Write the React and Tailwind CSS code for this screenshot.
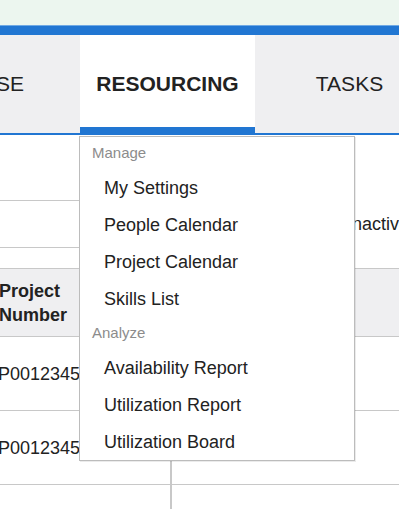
import React from "react";

const manage = ["My Settings", "People Calendar", "Project Calendar", "Skills List"];
const analyze = ["Availability Report", "Utilization Report", "Utilization Board"];

const MenuItem = ({ label }) => (
  <div className="flex h-[37px] items-center pl-6 pt-[2px] text-[18px] text-[#222]">{label}</div>
);

const MenuHeader = ({ label }) => (
  <div className="flex h-8 items-center pl-3 pt-[1px] text-[15px] text-[#8c8c8c]">{label}</div>
);

const App = () => {
  return (
    <div className="h-[509px] w-[399px] overflow-hidden bg-white font-['Liberation_Sans',Arial,sans-serif] text-[#222]">
      {/* top strip */}
      <div className="h-[25px] bg-[#ecf6ef]" />
      <div className="h-[10px] border-t border-[#6fa9e4] bg-[#2176d2]" />

      {/* tabs */}
      <div className="relative flex h-[100px] border-b-2 border-[#2176d2] bg-[#efeff1]">
        <div className="flex w-[80px] shrink-0 items-center overflow-hidden">
          <span className="-ml-[4px] text-[21px]">SE</span>
        </div>
        <div className="relative flex w-[175px] shrink-0 items-center justify-center border-b-[6px] border-[#2176d2] bg-white pt-[6px]">
          <span className="text-[21px] font-bold">RESOURCING</span>
          <div className="absolute left-[-1px] top-[101px] z-10 w-[276px] border border-[#bcbcbc] bg-white shadow-[1px_1px_0_rgba(0,0,0,0.08)]">
            <MenuHeader label="Manage" />
            {manage.map((m) => (
              <MenuItem key={m} label={m} />
            ))}
            <MenuHeader label="Analyze" />
            {analyze.map((m) => (
              <MenuItem key={m} label={m} />
            ))}
          </div>
        </div>
        <div className="flex w-[189px] shrink-0 items-center justify-center">
          <span className="text-[21px]">TASKS</span>
        </div>
      </div>

      {/* page behind */}
      <div className="h-[66px] w-[172px] border-b border-[#c8c8c8]" />
      <div className="flex h-[47px] items-center">
        <div className="h-full w-[172px] shrink-0 border-b border-[#c8c8c8]" />
        <span className="ml-[175px] shrink-0 text-[18px]">Inactive</span>
      </div>
      <div className="h-[20px]" />

      <div className="flex h-[69px] border-y border-[#c8c8c8] bg-[#efeff1]">
        <div className="-ml-[1px] flex w-[172px] shrink-0 flex-col justify-center text-[18px] font-bold leading-[24px]">
          <span>Project</span>
          <span>Number</span>
        </div>
      </div>
      {["P0012345", "P0012345"].map((p, i) => (
        <div key={i} className="flex h-[74px] border-b border-[#c8c8c8]">
          <div className="flex w-[172px] shrink-0 items-center border-r-2 border-[#c8c8c8] text-[18px]">
            <span className="-ml-[2px] pt-[1px]">{p}</span>
          </div>
        </div>
      ))}
      <div className="flex h-[40px]">
        <div className="w-[172px] shrink-0 border-r-2 border-[#c8c8c8]" />
      </div>
    </div>
  );
};

export default App;
